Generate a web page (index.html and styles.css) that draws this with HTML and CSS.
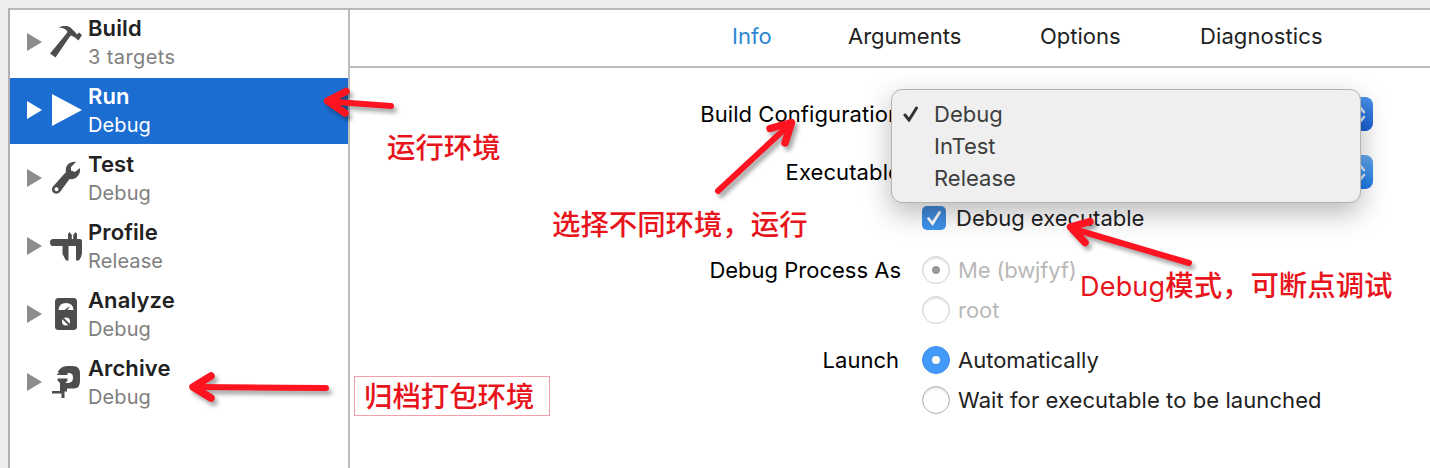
FILE: index.html
```html
<!DOCTYPE html>
<html lang="zh">
<head>
<meta charset="utf-8">
<title>Scheme</title>
<link rel="stylesheet" href="styles.css">
</head>
<body>
<div class="window">
  <nav class="sidebar">
    <div class="phase">
      <svg class="disclosure" viewBox="0 0 15 18"><path d="M0 0L15 9L0 18Z"/></svg>
      <svg class="icon" viewBox="0 0 34 34"><path d="M10 2.500C14 .5 19 .5 22 3L26 7L28 9.500L30 7.500L33 10L29.500 15.500L26 12.500L22 10.500L20.500 12L6.500 32.500L1 28.500L15.500 11L18.500 7C17 3.500 14 3 10 2.500Z"/></svg>
      <div class="names"><b>Build</b><span class="wide">3 targets</span></div>
    </div>
    <div class="phase selected">
      <svg class="disclosure" viewBox="0 0 15 18"><path d="M0 0L15 9L0 18Z"/></svg>
      <svg class="icon" viewBox="0 0 34 34"><path d="M3 1L33 17L3 33Z"/></svg>
      <div class="names"><b>Run</b><span>Debug</span></div>
    </div>
    <div class="phase">
      <svg class="disclosure" viewBox="0 0 15 18"><path d="M0 0L15 9L0 18Z"/></svg>
      <svg class="icon" viewBox="0 0 34 34"><path fill-rule="evenodd" d="M27 1C21 0 15.500 5 17 11L4 25.500C.5 30 6 35.500 11 31L20.500 18C25.500 19.500 32 15 31 7L26 11L22 9.500L22 6ZM7.500 26.200A2 2 0 1 0 7.500 30.200A2 2 0 1 0 7.500 26.200Z"/></svg>
      <div class="names"><b>Test</b><span>Debug</span></div>
    </div>
    <div class="phase">
      <svg class="disclosure" viewBox="0 0 15 18"><path d="M0 0L15 9L0 18Z"/></svg>
      <svg class="icon" viewBox="0 0 34 34"><path d="M4 10H19V5L20.500 3L22.800 6V10H24.200V6L26.500 3L28 5V10H31Q33 10 33 12V23Q33 28 30 31.500H27V17H19.500V31.500H17L13.500 25V17H4Q1 17 1 13.500Q1 10 4 10Z"/></svg>
      <div class="names"><b>Profile</b><span class="mid">Release</span></div>
    </div>
    <div class="phase">
      <svg class="disclosure" viewBox="0 0 15 18"><path d="M0 0L15 9L0 18Z"/></svg>
      <svg class="icon" viewBox="0 0 34 34"><rect x="6" y="1" width="22" height="32" rx="3.500"/><path class="cut" d="M9.500 13Q10 6 17 6Q24 6 24.500 13H18.500L21 9L15.500 13Z"/><circle class="cut" cx="17" cy="24.500" r="4"/><path class="slash" d="M14 21.500L20 27.500"/></svg>
      <div class="names"><b>Analyze</b><span>Debug</span></div>
    </div>
    <div class="phase">
      <svg class="disclosure" viewBox="0 0 15 18"><path d="M0 0L15 9L0 18Z"/></svg>
      <svg class="icon" viewBox="0 0 34 34"><path d="M8.500 7Q12 1 18 1H24Q31 1 31 9V16Q31 23.500 25 23.500H18V26.500H15.500V33H12.500V28.500H3V26H11V18L8.500 15.500V13.500H18.500V15.500L16.500 18H20Q24 17 24 12.500Q24 8 20 8H18.500V10H8V9L10.500 8Z"/></svg>
      <div class="names"><b>Archive</b><span>Debug</span></div>
    </div>
  </nav>

  <main class="detail">
    <div class="tabs">
      <span class="tab active">Info</span><span class="tab arguments">Arguments</span><span class="tab options">Options</span><span class="tab diagnostics">Diagnostics</span>
    </div>
    <div class="form">
      <div class="row">
        <label class="label t-build">Build Configuration</label>
        <div class="select"><span class="cap deep"><svg viewBox="0 0 18 24"><path d="M3 10L9 3L15 10M3 15L9 22L15 15"/></svg></span></div>
      </div>
      <div class="row executable">
        <label class="label t-exec">Executable</label>
        <div class="select"><span class="cap"><svg viewBox="0 0 18 24"><path d="M3 10L9 3L15 10M3 15L9 22L15 15"/></svg></span></div>
      </div>
      <div class="row debug">
        <label class="label"></label>
        <span class="check"><svg viewBox="0 0 24 24"><path d="M6.500 12.500L10.500 17.500L17.500 6.500"/></svg></span>
        <span>Debug executable</span>
      </div>
      <div class="row process disabled">
        <label class="label">Debug Process As</label>
        <span class="radio dot"></span><span class="option t-me">Me (bwjfyf)</span>
      </div>
      <div class="row disabled">
        <label class="label"></label>
        <span class="radio"></span><span class="option">root</span>
      </div>
      <div class="row launch">
        <label class="label t-launch">Launch</label>
        <span class="radio on"></span><span class="option">Automatically</span>
      </div>
      <div class="row">
        <label class="label"></label>
        <span class="radio"></span><span class="option t-wait">Wait for executable to be launched</span>
      </div>
    </div>
  </main>
</div>

<div class="menu">
  <div class="item"><svg class="tick" viewBox="0 0 16 16"><path d="M2 9L6 14L13.500 2"/></svg><span>Debug</span></div>
  <div class="item"><span>InTest</span></div>
  <div class="item"><span>Release</span></div>
</div>

<svg class="arrows" viewBox="0 0 1430 468">
  <g class="arrow">
    <path d="M391 106L330 101.500"/><path class="head" d="M346 91.500L327.500 101L345 113"/>
    <path d="M718 191L789 125"/><path class="head" d="M770 128.500L791.500 122.500L785 143"/>
    <path d="M1189 263L1072 228.500"/><path class="head" d="M1090 221.500L1070.500 227L1085 242.500"/>
    <path d="M326 388L194 387"/><path class="head" d="M211 376L193 387L211 398"/>
  </g>
</svg>
<div class="note env">运行环境</div>
<div class="note choose">选择不同环境，运行</div>
<div class="note mode"><span class="latin">Debug</span>模式，可断点调试</div>
<div class="note archive"><span>归档打包环境</span></div>
</body>
</html>
```
FILE: styles.css
```css
* { box-sizing: border-box; }
body {
  margin: 0;
  width: 1430px;
  height: 468px;
  overflow: hidden;
  position: relative;
  padding: 8px 0 0 8px;
  background: #eeeeee;
  font-family: Inter, "Noto Sans CJK SC", sans-serif;
  font-size: 22px;
  color: #222;
}
.window {
  display: flex;
  height: 460px;
  border-top: 2px solid #b8b8b8;
  border-left: 2px solid #b0b0b0;
  background: #fff;
}
.sidebar {
  width: 340px;
  border-right: 2px solid #bdbdbd;
  display: flex;
  flex-direction: column;
  gap: 2px;
}
.phase {
  height: 66px;
  display: flex;
  align-items: center;
  padding: 0 0 2px 17px;
  fill: #4d4d4d;
}
.disclosure { width: 15px; height: 18px; fill: #8c8c8c; }
.icon { width: 34px; height: 34px; margin: 0 5px 0 7px; }
.cut { fill: #fff; }
.slash { stroke: #4d4d4d; stroke-width: 2; }
.names { display: flex; flex-direction: column; padding-bottom: 1px; }
.names b { font-size: 22px; line-height: 30px; font-weight: 600; letter-spacing: .1px; }
.names span { font-size: 20px; line-height: 28px; color: #808080; letter-spacing: .1px; }
.names .wide { letter-spacing: .4px; }
.selected { background: #1c6dd2; color: #fff; fill: #fff; }
.selected .disclosure { fill: #fff; }
.selected .names span { color: #fff; }

.detail { flex: 1; display: flex; flex-direction: column; }
.tabs {
  height: 58px;
  border-bottom: 2px solid #bdbdbd;
  display: flex;
  line-height: 53px;
  padding-left: 382px;
  white-space: nowrap;
}
.tab { width: 116px; flex: none; }
.tab.arguments { width: 192px; }
.tab.options { width: 160px; }
.tab.diagnostics { letter-spacing: .1px; }
.tab.active { color: #2a86d1; }
.form { padding-top: 26px; display: flex; flex-direction: column; }
.row { height: 40px; display: flex; align-items: center; white-space: nowrap; }
.label { width: 551px; margin-right: 21px; display: flex; justify-content: flex-end; color: #000; flex: none; }
.t-build { letter-spacing: .08px; }
.t-exec { letter-spacing: .1px; }
.t-launch { padding-right: 2px; }
.executable { margin-top: 18px; }
.debug { margin-top: 6px; }
.process { margin-top: 12px; }
.launch { margin-top: 10px; }
.select {
  width: 451px;
  height: 34px;
  border-radius: 8px;
  border: 1px solid #ccc;
  display: flex;
  justify-content: flex-end;
}
.cap {
  width: 32px;
  height: 34px;
  margin: -1px;
  border-radius: 0 8px 8px 0;
  background: linear-gradient(#62a9ee, #1c78e8);
  display: flex;
  align-items: center;
  justify-content: center;
}
.cap.deep { background: linear-gradient(#4a92ea, #1a5fd5); }
.cap svg { width: 18px; height: 24px; margin-left: 2px; fill: none; stroke: #dbe8fc; stroke-width: 2.600; stroke-linecap: round; }
.check {
  width: 24px;
  height: 24px;
  border-radius: 5px;
  background: linear-gradient(#4287d5, #3e93f0);
  margin-right: 10px;
}
.check svg { display: block; fill: none; stroke: #fff; stroke-width: 2.800; stroke-linecap: round; }
.radio {
  width: 28px;
  height: 28px;
  border-radius: 50%;
  border: 1px solid #b0b0b0;
  box-shadow: inset 0 2px 2px #e5e5e5;
  margin-right: 8px;
  display: grid;
  place-items: center;
}
.disabled .radio { border-color: #d0d0d0; }
.disabled .option { color: #b8b8b8; }
.t-me { letter-spacing: -.15px; }
.t-wait { letter-spacing: .08px; }
.dot::after { content: ""; width: 8px; height: 8px; border-radius: 50%; background: #999; }
.on { background: #429bf7; border-color: #3e90e8; box-shadow: none; }
.on::after { content: ""; width: 8px; height: 8px; border-radius: 50%; background: #fff; }

.menu {
  position: absolute;
  left: 891px;
  top: 89px;
  width: 470px;
  height: 114px;
  padding: 8px 0 0 42px;
  background: #efefef;
  border: 1px solid #b2b2b2;
  border-radius: 11px;
  box-shadow: 0 10px 28px rgba(0, 0, 0, .28);
  color: #3d3d3d;
}
.item { height: 32px; line-height: 32px; position: relative; }
.tick {
  position: absolute;
  left: -31px;
  top: 8px;
  width: 16px;
  height: 16px;
  fill: none;
  stroke: #333;
  stroke-width: 3;
  stroke-linecap: round;
}
.arrows { position: absolute; left: 0; top: 0; width: 1430px; height: 468px; }
.arrow {
  fill: none;
  stroke: #fc1520;
  stroke-width: 6;
  stroke-linecap: round;
  stroke-linejoin: round;
  filter: drop-shadow(3px 4px 2px rgba(0, 0, 0, .35));
}
.head { stroke-width: 7.500; }
.note {
  position: absolute;
  color: #e8141c;
  font: 500 28.400px/40px "Noto Sans CJK SC", sans-serif;
  white-space: nowrap;
}
.latin { font-family: Inter, sans-serif; font-size: 27px; font-weight: 400; letter-spacing: .2px; }
.env { left: 387px; top: 126px; }
.choose { left: 552px; top: 203px; }
.mode { left: 1080px; top: 264px; }
.archive {
  left: 354px;
  top: 376px;
  width: 196px;
  height: 40px;
  line-height: 36px;
  padding-left: 9px;
  border: 1px solid #f0a0a8;
}
```
